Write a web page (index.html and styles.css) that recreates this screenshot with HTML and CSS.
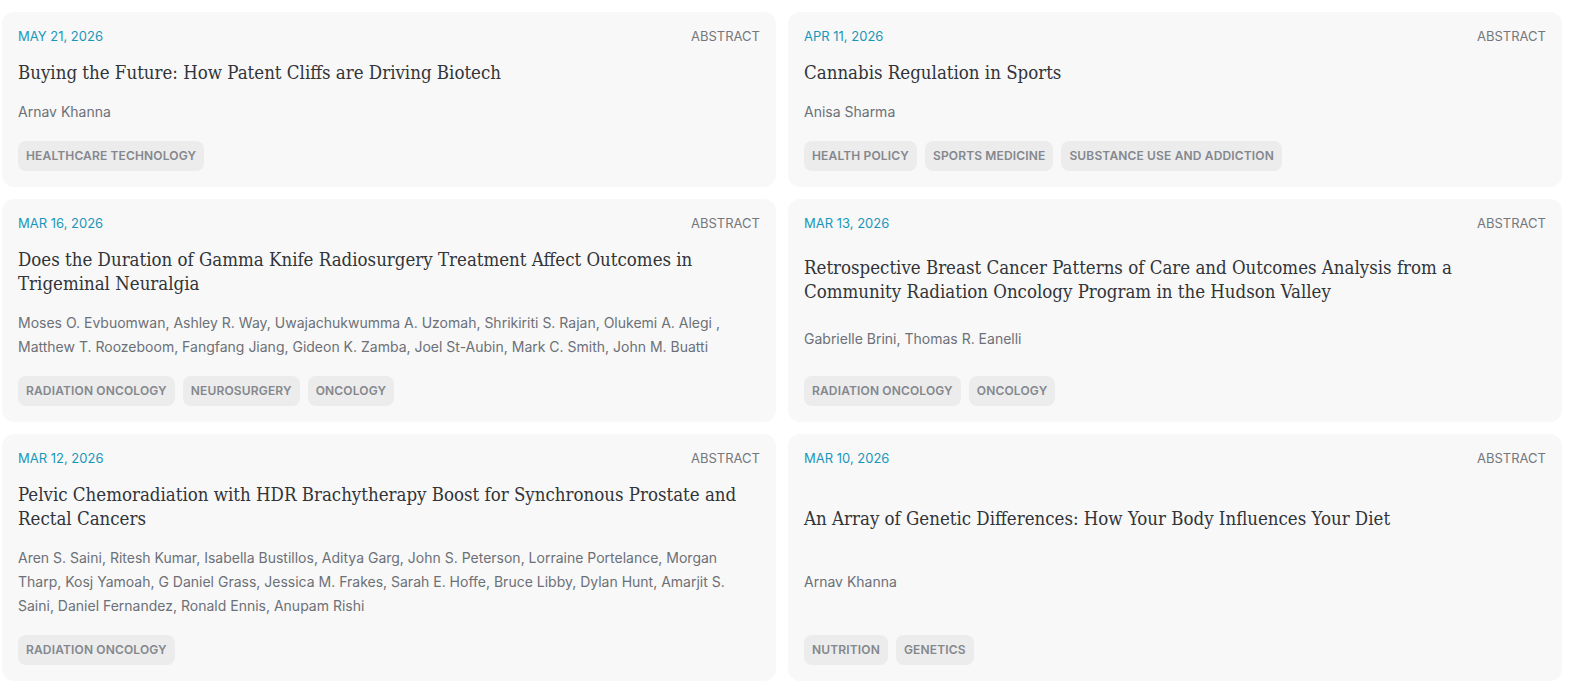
FILE: index.html
```html
<!DOCTYPE html>
<html lang="en">

<head>
  <meta charset="UTF-8">
  <meta name="viewport" content="width=device-width, initial-scale=1.0">
  <title>Publications</title>
  <link rel="stylesheet" href="styles.css">
</head>

<body>
  <section class="papers">

    <article class="paper">
      <header class="paper-head">
        <span class="paper-date">May 21, 2026</span>
        <span class="paper-type">Abstract</span>
      </header>
      <h2 class="paper-title">Buying the Future: How Patent Cliffs are Driving Biotech</h2>
      <p class="paper-authors">Arnav Khanna</p>
      <ul class="paper-tags">
        <li>Healthcare Technology</li>
      </ul>
    </article>

    <article class="paper">
      <header class="paper-head">
        <span class="paper-date">Apr 11, 2026</span>
        <span class="paper-type">Abstract</span>
      </header>
      <h2 class="paper-title">Cannabis Regulation in Sports</h2>
      <p class="paper-authors">Anisa Sharma</p>
      <ul class="paper-tags">
        <li>Health Policy</li>
        <li>Sports Medicine</li>
        <li>Substance Use and Addiction</li>
      </ul>
    </article>

    <article class="paper">
      <header class="paper-head">
        <span class="paper-date">Mar 16, 2026</span>
        <span class="paper-type">Abstract</span>
      </header>
      <h2 class="paper-title">Does the Duration of Gamma Knife Radiosurgery Treatment Affect Outcomes in Trigeminal Neuralgia</h2>
      <p class="paper-authors">Moses O. Evbuomwan, Ashley R. Way, Uwajachukwumma A. Uzomah, Shrikiriti S. Rajan, Olukemi A. Alegi , Matthew T. Roozeboom, Fangfang Jiang, Gideon K. Zamba, Joel St-Aubin, Mark C. Smith, John M. Buatti</p>
      <ul class="paper-tags">
        <li>Radiation Oncology</li>
        <li>Neurosurgery</li>
        <li>Oncology</li>
      </ul>
    </article>

    <article class="paper">
      <header class="paper-head">
        <span class="paper-date">Mar 13, 2026</span>
        <span class="paper-type">Abstract</span>
      </header>
      <h2 class="paper-title">Retrospective Breast Cancer Patterns of Care and Outcomes Analysis from a Community Radiation Oncology Program in the Hudson Valley</h2>
      <p class="paper-authors">Gabrielle Brini, Thomas R. Eanelli</p>
      <ul class="paper-tags">
        <li>Radiation Oncology</li>
        <li>Oncology</li>
      </ul>
    </article>

    <article class="paper">
      <header class="paper-head">
        <span class="paper-date">Mar 12, 2026</span>
        <span class="paper-type">Abstract</span>
      </header>
      <h2 class="paper-title">Pelvic Chemoradiation with HDR Brachytherapy Boost for Synchronous Prostate and Rectal Cancers</h2>
      <p class="paper-authors">Aren S. Saini, Ritesh Kumar, Isabella Bustillos, Aditya Garg, John S. Peterson, Lorraine Portelance, Morgan Tharp, Kosj Yamoah, G Daniel Grass, Jessica M. Frakes, Sarah E. Hoffe, Bruce Libby, Dylan Hunt, Amarjit S. Saini, Daniel Fernandez, Ronald Ennis, Anupam Rishi</p>
      <ul class="paper-tags">
        <li>Radiation Oncology</li>
      </ul>
    </article>

    <article class="paper">
      <header class="paper-head">
        <span class="paper-date">Mar 10, 2026</span>
        <span class="paper-type">Abstract</span>
      </header>
      <h2 class="paper-title">An Array of Genetic Differences: How Your Body Influences Your Diet</h2>
      <p class="paper-authors">Arnav Khanna</p>
      <ul class="paper-tags">
        <li>Nutrition</li>
        <li>Genetics</li>
      </ul>
    </article>

  </section>
</body>

</html>
```

FILE: styles.css
```css
html {
  box-sizing: border-box;
  font-family: 'Inter', 'Liberation Sans', sans-serif;
  font-size: 16px;
}

*,
*::after,
*::before {
  box-sizing: inherit;
}

body {
  margin: 0;
  background-color: #fff;
}

.papers {
  display: grid;
  grid-template-columns: 1fr 1fr;
  gap: 12px;
  padding: 12px 12px 12px 2px;
}

.paper {
  display: flex;
  flex-direction: column;
  justify-content: space-between;
  padding: 16px;
  border-radius: 12px;
  background-color: #f8f8f8;
}

.paper-head {
  display: flex;
  justify-content: space-between;
  align-items: center;
  height: 16px;
  font-size: 13px;
  line-height: 16px;
  text-transform: uppercase;
}

.paper-date {
  color: #1897bb;
}

.paper-type {
  color: #74777c;
}

.paper-title {
  margin: 17px 0 0;
  font-family: 'DejaVu Serif', 'Liberation Serif', serif;
  font-stretch: condensed;
  font-size: 18.5px;
  font-weight: normal;
  line-height: 24px;
  color: #313438;
}

.paper-authors {
  margin: 15px 0 0;
  font-size: 14px;
  line-height: 24px;
  color: #6c7077;
}

.paper-tags {
  display: flex;
  flex-wrap: wrap;
  gap: 8px;
  margin: 17px 0 0;
  padding: 0;
  list-style: none;
}

.paper-tags li {
  padding: 0 8px;
  border-radius: 8px;
  background-color: #ececec;
  font-size: 12px;
  font-weight: 600;
  letter-spacing: .15px;
  line-height: 30px;
  text-transform: uppercase;
  color: #84878d;
}
```
